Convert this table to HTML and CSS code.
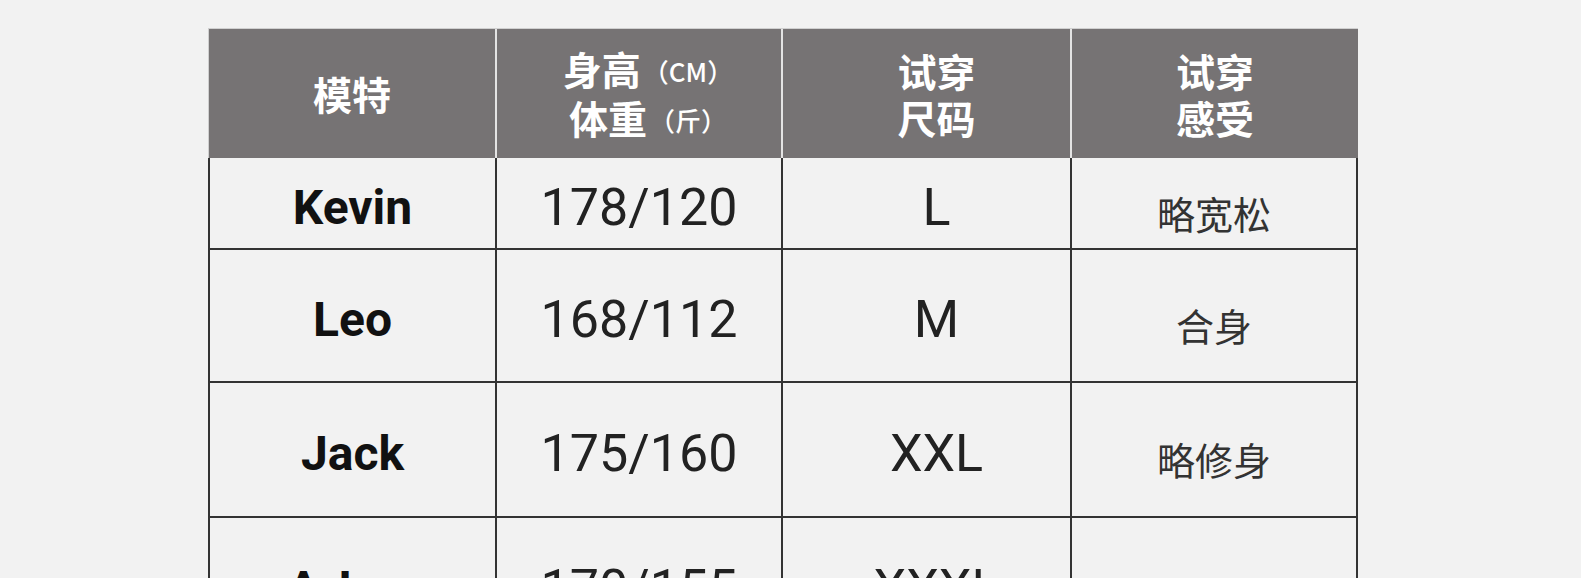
FILE: index.html
```html
<!DOCTYPE html>
<html lang="zh-CN">
<head>
<meta charset="utf-8">
<title>试穿报告</title>
<link rel="stylesheet" href="styles.css">
</head>
<body>
<div class="size-table">
  <div class="cell head"><div class="h-line">模特</div></div>
  <div class="cell head body-info">
    <div class="h-line">身高<span class="unit">（CM）</span></div>
    <div class="h-line">体重<span class="unit">（斤）</span></div>
  </div>
  <div class="cell head size">
    <div class="h-line">试穿</div>
    <div class="h-line">尺码</div>
  </div>
  <div class="cell head last">
    <div class="h-line">试穿</div>
    <div class="h-line">感受</div>
  </div>

  <div class="cell first name">Kevin</div>
  <div class="cell num">178/120</div>
  <div class="cell num size">L</div>
  <div class="cell feel">略宽松</div>

  <div class="cell first name">Leo</div>
  <div class="cell num">168/112</div>
  <div class="cell num size">M</div>
  <div class="cell feel">合身</div>

  <div class="cell first name">Jack</div>
  <div class="cell num">175/160</div>
  <div class="cell num size">XXL</div>
  <div class="cell feel">略修身</div>

  <div class="cell first name">A-Lun</div>
  <div class="cell num">170/155</div>
  <div class="cell num size">XXXL</div>
  <div class="cell feel"></div>
</div>
</body>
</html>
```
FILE: styles.css
```css
html, body {
  margin: 0;
  padding: 0;
  background: #f2f2f2;
  overflow: hidden;
}

body {
  padding: 28px 0 0 208px;
  font-family: Roboto, "Noto Sans CJK SC", sans-serif;
}

.size-table {
  display: grid;
  grid-template-columns: 289px 286px 289px 286px;
  grid-template-rows: 129px 92px 133px 135px 135px;
  width: 1150px;
  border-top: 1px solid #d0d0d0;
}

.cell {
  box-sizing: border-box;
  display: flex;
  flex-direction: column;
  align-items: center;
  justify-content: center;
  background: #f2f2f2;
  border-right: 2px solid #333;
  border-bottom: 2px solid #333;
  color: #1c1c1c;
}

.cell.first {
  border-left: 2px solid #333;
}

.cell.head {
  background: #767374;
  color: #fff;
  border-right: 2px solid #e4e4e4;
  border-bottom: none;
  font-family: "Noto Sans CJK SC", sans-serif;
  font-weight: 700;
  font-size: 39px;
  padding-top: 0;
}

.cell.head:first-child {
  border-left: 1px solid #cfcfcf;
}

.cell.head.last {
  border-right: none;
}

.cell.head.body-info {
  padding-left: 18px;
}

.cell.size {
  padding-left: 20px;
}

.h-line {
  line-height: 47px;
  white-space: nowrap;
}

.unit {
  font-size: 26px;
  font-weight: 500;
  vertical-align: 3px;
  margin-left: 2px;
}

.name {
  font-family: Roboto, sans-serif;
  font-weight: 700;
  font-size: 48px;
  color: #111;
  padding-top: 8px;
}

.num {
  font-family: Roboto, sans-serif;
  font-weight: 400;
  font-size: 52px;
  color: #222;
  padding-top: 8px;
}

.feel {
  font-family: "Noto Sans CJK SC", sans-serif;
  font-size: 38px;
  color: #333;
  padding-top: 18px;
}
```
